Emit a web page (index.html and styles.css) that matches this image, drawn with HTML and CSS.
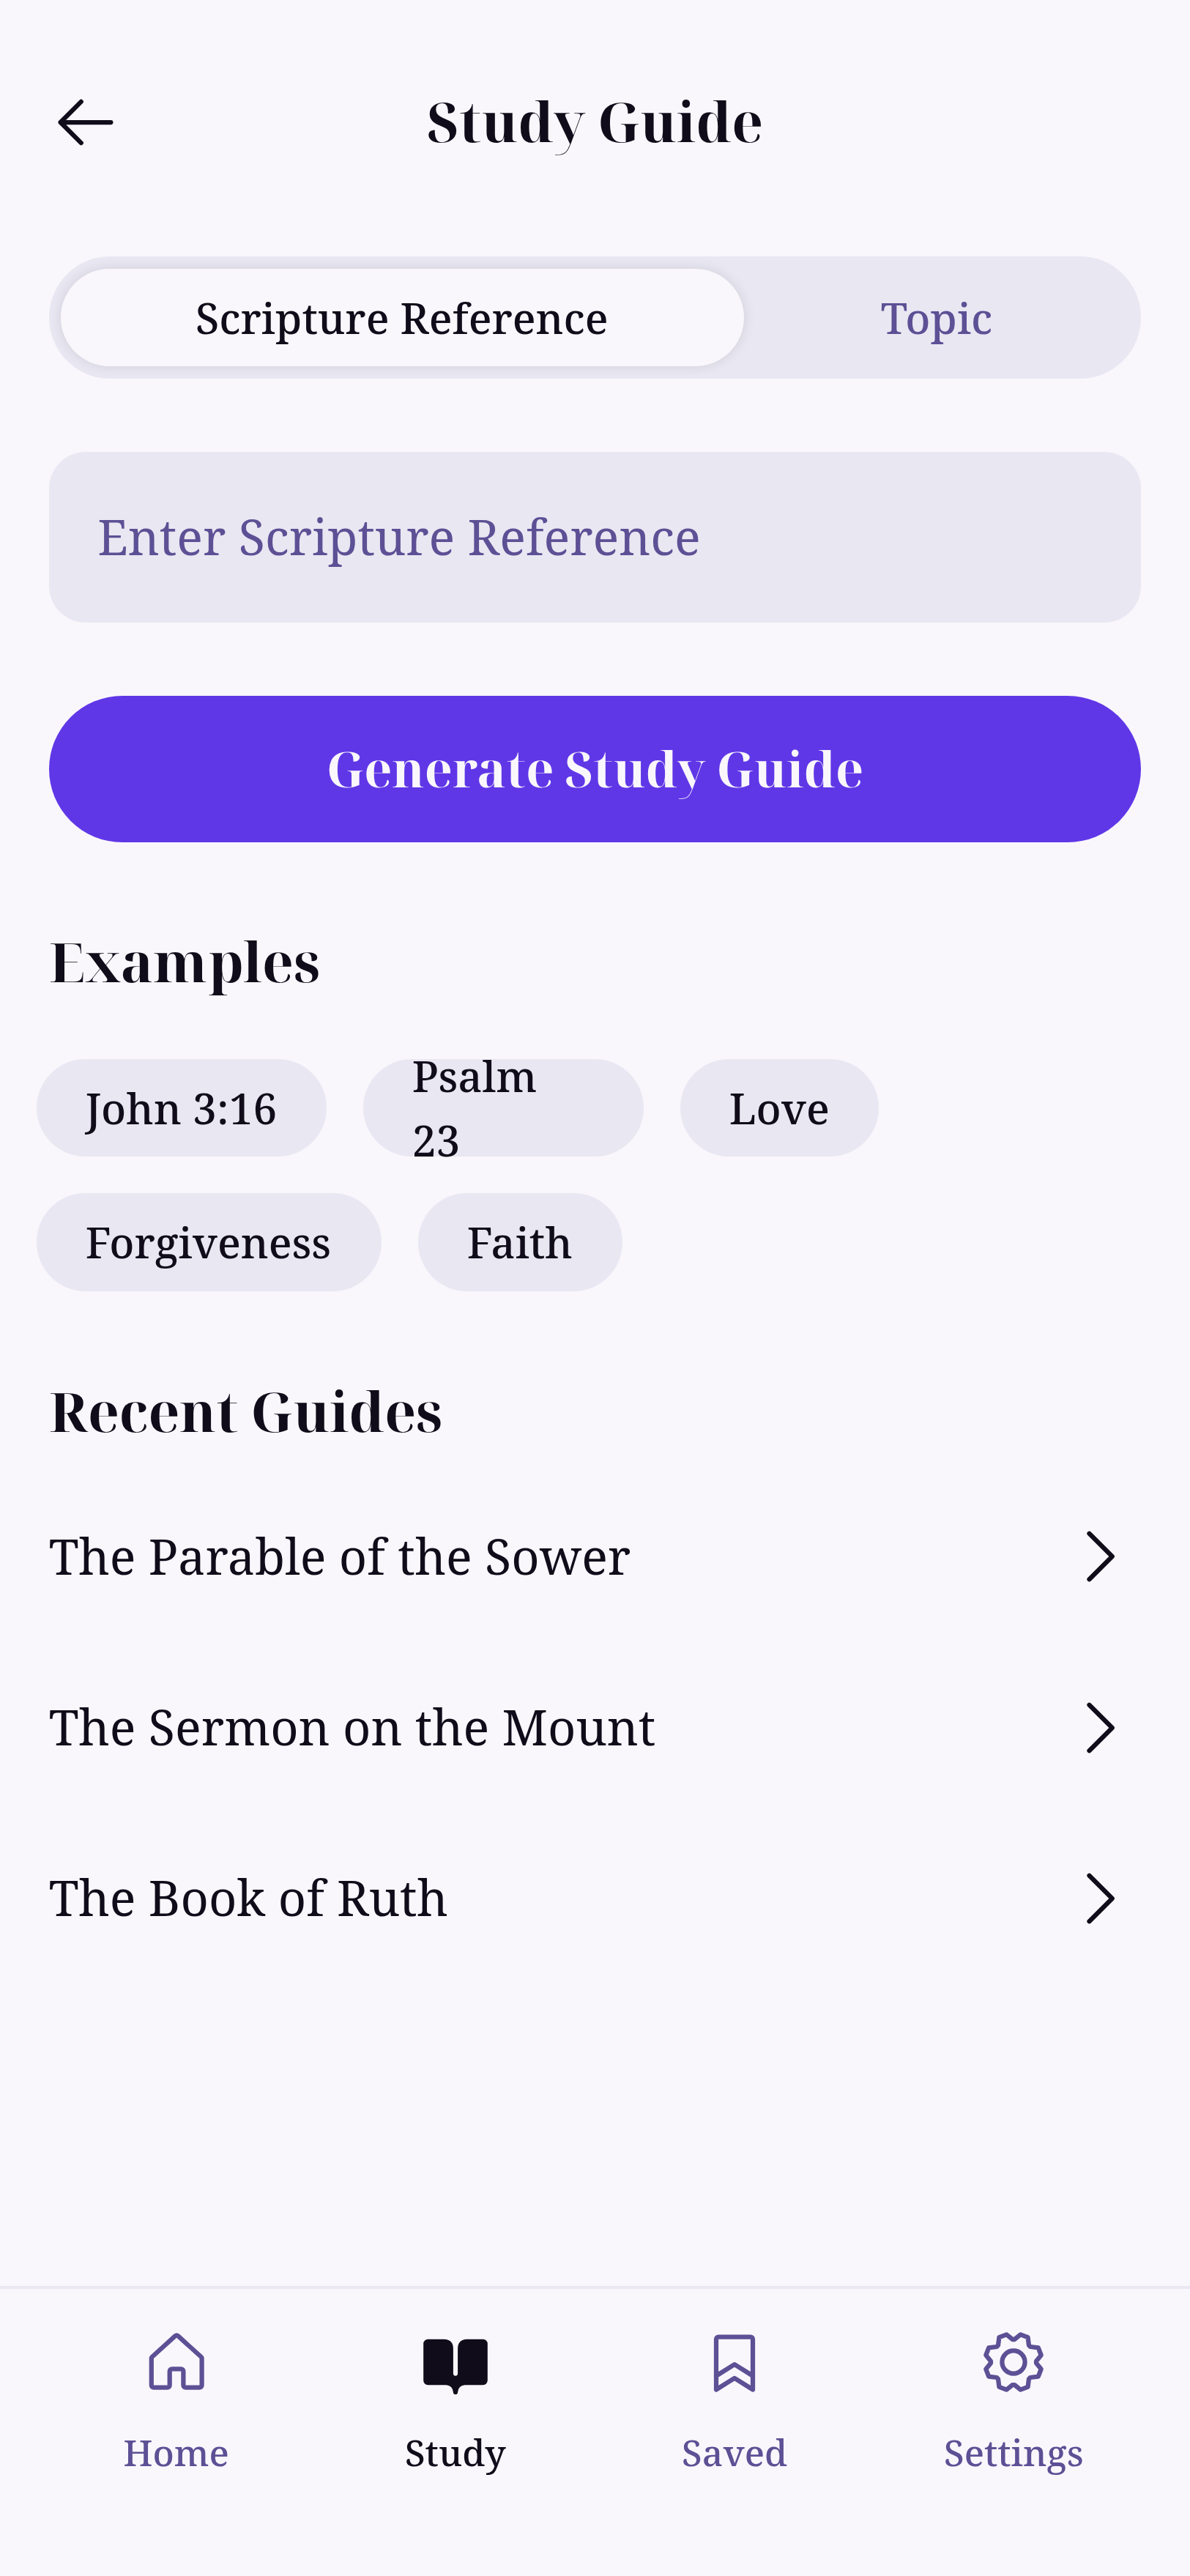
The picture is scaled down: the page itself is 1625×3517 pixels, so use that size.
FILE: index.html
```html
<!DOCTYPE html>
<html lang="en">
<head>
<meta charset="utf-8">
<title>Study Guide</title>
<link rel="stylesheet" href="styles.css">
</head>
<body>
<div class="screen">
  <header class="topbar">
    <svg class="icon" viewBox="0 0 256 256"><path d="M216 128H40M112 56L40 128l72 72"/></svg>
    <h1 class="heading title">Study Guide</h1>
  </header>
  <div class="tabs">
    <div class="tab tab-active">Scripture Reference</div>
    <div class="tab tab-topic">Topic</div>
  </div>
  <div class="field">Enter Scripture Reference</div>
  <div class="button heading">Generate Study Guide</div>
  <h2 class="heading section examples">Examples</h2>
  <div class="chips">
    <div class="chip chip-john">John 3:16</div>
    <div class="chip chip-psalm">Psalm<br>23</div>
    <div class="chip chip-love">Love</div>
    <div class="chip chip-forgiveness">Forgiveness</div>
    <div class="chip chip-faith">Faith</div>
  </div>
  <h2 class="heading section recent">Recent Guides</h2>
  <div class="list">
    <div class="row"><span>The Parable of the Sower</span><svg class="icon" viewBox="0 0 256 256"><path d="M96 48l80 80-80 80"/></svg></div>
    <div class="row"><span>The Sermon on the Mount</span><svg class="icon" viewBox="0 0 256 256"><path d="M96 48l80 80-80 80"/></svg></div>
    <div class="row"><span>The Book of Ruth</span><svg class="icon" viewBox="0 0 256 256"><path d="M96 48l80 80-80 80"/></svg></div>
  </div>
  <nav class="nav">
    <div class="nav-item"><svg class="icon nav-icon" viewBox="0 0 100 100"><path d="M52.3 14.4L83.6 42.8q1 .9 1 2.3V81.6a3.1 3.1 0 0 1-3.1 3.1H62.5a3.1 3.1 0 0 1-3.1-3.1V62.4a3.1 3.1 0 0 0-3.1-3.1H43.8a3.1 3.1 0 0 0-3.1 3.1V81.6a3.1 3.1 0 0 1-3.1 3.1H18.9a3.1 3.1 0 0 1-3.1-3.1V45.1q0-1.4 1-2.3L48.1 14.4q2.1-1.8 4.2 0Z"/></svg><span>Home</span></div>
    <div class="nav-item nav-active"><svg class="icon nav-icon filled" viewBox="0 0 100 100"><path d="M12.5 18.8H34.4Q46.9 19.5 46.9 31.3V65.6a3.1 3.1 0 0 0 6.2 0V31.3Q53.1 19.5 65.6 18.8H87.5A6.2 6.2 0 0 1 93.8 25V75a6.2 6.2 0 0 1-6.3 6.3H62.5Q53.8 82.5 53.1 91a3.1 3.1 0 0 1-6.2 0Q46.2 82.5 37.5 81.3H12.5A6.2 6.2 0 0 1 6.2 75V25A6.2 6.2 0 0 1 12.5 18.8Z"/></svg><span>Study</span></div>
    <div class="nav-item"><svg class="icon" viewBox="0 0 256 256"><path d="M64 224V48a8 8 0 0 1 8-8H184a8 8 0 0 1 8 8V224l-64-40ZM64 176l64-40 64 40"/></svg><span>Saved</span></div>
    <div class="nav-item"><svg class="icon nav-icon" viewBox="-50 -50 100 100"><circle r="15.6"/><path d="M-1.3-31L1.3-31L9.5-37.7L19.6-33.8L21-23L23-21L33.8-19.6L37.7-9.5L31-1.3L31 1.3L37.7 9.5L33.8 19.6L23 21L21 23L19.6 33.8L9.5 37.7L1.3 31L-1.3 31L-9.5 37.7L-19.6 33.8L-21 23L-23 21L-33.8 19.6L-37.7 9.5L-31 1.3L-31-1.3L-37.7-9.5L-33.8-19.6L-23-21L-21-23L-19.6-33.8L-9.5-37.7Z"/></svg><span>Settings</span></div>
  </nav>
</div>
</body>
</html>
```

FILE: styles.css
```css
* { box-sizing: border-box; }

body {
  margin: 0;
  background: #f9f7fc;
  color: #100c1a;
  font-family: "Noto Serif", "DejaVu Serif Condensed", "DejaVu Serif", serif;
}

.screen {
  display: flex;
  flex-direction: column;
  width: 1625px;
  height: 3517px;
  overflow: hidden;
}

.heading {
  margin: 0;
  font-family: "Noto Serif Display", "Liberation Serif", serif;
  font-weight: 700;
  white-space: nowrap;
}

.icon {
  flex: none;
  display: block;
  width: 100px;
  height: 100px;
  fill: none;
  stroke: currentColor;
  stroke-width: 16;
  stroke-linecap: round;
  stroke-linejoin: round;
}

.nav-icon { stroke-width: 6.25; }
.filled { fill: currentColor; stroke: none; }

.topbar {
  display: flex;
  align-items: center;
  height: 200px;
  margin-top: 67px;
  padding: 0 67px;
}

.title {
  flex: 1;
  padding: 0 100px 4px 0;
  font-size: 75px;
  line-height: 96px;
  text-align: center;
}

.tabs {
  display: flex;
  height: 166.67px;
  margin: 83px 66.67px 0;
  padding: 16.67px;
  border-radius: 83.33px;
  background: #e9e7f2;
}

.tab {
  display: flex;
  align-items: center;
  justify-content: center;
  font-size: 58.33px;
  font-weight: 500;
  white-space: nowrap;
}

.tab-active {
  width: 933px;
  padding-right: 2px;
  border-radius: 66.67px;
  background: #f9f7fc;
  box-shadow: 0 0 16.67px rgba(0, 0, 0, .1);
}

.tab-topic { flex: 1; color: #5d5095; }

.field {
  display: flex;
  align-items: center;
  height: 233.33px;
  margin: 100px 66.67px 0;
  padding: 0 66.67px 2px;
  border-radius: 50px;
  background: #e9e7f2;
  color: #5d5095;
  font-size: 66.67px;
  white-space: nowrap;
}

.button {
  display: flex;
  align-items: center;
  justify-content: center;
  height: 200px;
  margin: 100px 66.67px 0;
  border-radius: 100px;
  background: #6037e7;
  color: #f9f7fc;
  font-size: 66.67px;
}

.section {
  margin-left: 67px;
  font-size: 75px;
  line-height: 100px;
}

.examples { margin-top: 112px; }
.recent { margin-top: 113px; }

.chips {
  display: flex;
  flex-wrap: wrap;
  gap: 50px;
  width: 1500px;
  margin: 84px 0 0 50px;
}

.chip {
  display: flex;
  align-items: center;
  height: 133.33px;
  padding: 0 66.67px;
  border-radius: 66.67px;
  background: #e9e7f2;
  font-size: 58.33px;
  font-weight: 500;
  line-height: 87.5px;
  white-space: nowrap;
}

.chip-john { width: 396px; }
.chip-psalm { width: 383px; }
.chip-love { width: 271px; margin-right: 300px; }
.chip-forgiveness { width: 471px; }
.chip-faith { width: 279px; }

.list { margin: 33px 75px 0 66.67px; }

.row {
  display: flex;
  align-items: center;
  justify-content: space-between;
  height: 233.33px;
  font-size: 66.67px;
  white-space: nowrap;
}

.row span { padding-bottom: 2px; }

.nav {
  display: flex;
  gap: 33.33px;
  height: 396px;
  margin-top: auto;
  padding: 50px 66.67px 0;
  border-top: 4px solid #e9e7f2;
  color: #5d5095;
}

.nav-item {
  flex: 1 1 0;
  display: flex;
  flex-direction: column;
  align-items: center;
  font-size: 50px;
  font-weight: 500;
  line-height: 75px;
}

.nav-item span { margin-top: 36px; }
.nav-active { color: #100c1a; }
```
